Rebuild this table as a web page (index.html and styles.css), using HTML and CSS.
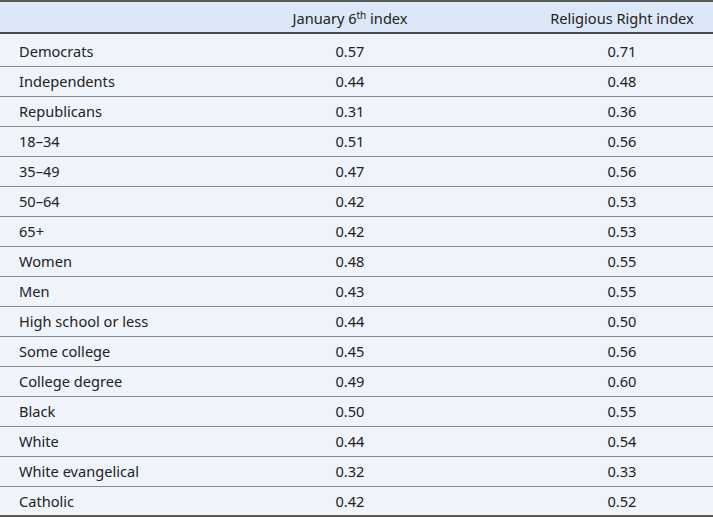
FILE: index.html
```html
<!DOCTYPE html>
<html lang="en">
<head>
<meta charset="utf-8">
<title>Index table</title>
<link rel="stylesheet" href="styles.css">
</head>
<body>
<table class="data">
  <colgroup>
    <col class="c-label">
    <col class="c-jan">
    <col class="c-rel">
  </colgroup>
  <thead>
    <tr>
      <th class="label"></th>
      <th>January 6<sup>th</sup> index</th>
      <th>Religious Right index</th>
    </tr>
  </thead>
  <tbody>
    <tr class="first"><td class="label">Democrats</td><td>0.57</td><td>0.71</td></tr>
    <tr><td class="label">Independents</td><td>0.44</td><td>0.48</td></tr>
    <tr><td class="label">Republicans</td><td>0.31</td><td>0.36</td></tr>
    <tr><td class="label">18–34</td><td>0.51</td><td>0.56</td></tr>
    <tr><td class="label">35–49</td><td>0.47</td><td>0.56</td></tr>
    <tr><td class="label">50–64</td><td>0.42</td><td>0.53</td></tr>
    <tr><td class="label">65+</td><td>0.42</td><td>0.53</td></tr>
    <tr><td class="label">Women</td><td>0.48</td><td>0.55</td></tr>
    <tr><td class="label">Men</td><td>0.43</td><td>0.55</td></tr>
    <tr><td class="label">High school or less</td><td>0.44</td><td>0.50</td></tr>
    <tr><td class="label">Some college</td><td>0.45</td><td>0.56</td></tr>
    <tr><td class="label">College degree</td><td>0.49</td><td>0.60</td></tr>
    <tr><td class="label">Black</td><td>0.50</td><td>0.55</td></tr>
    <tr><td class="label">White</td><td>0.44</td><td>0.54</td></tr>
    <tr><td class="label">White evangelical</td><td>0.32</td><td>0.33</td></tr>
    <tr class="last"><td class="label">Catholic</td><td>0.42</td><td>0.52</td></tr>
  </tbody>
</table>
</body>
</html>
```

FILE: styles.css
```css
html, body {
  margin: 0;
  padding: 0;
  background: #ffffff;
}

.data {
  width: 713px;
  border-collapse: collapse;
  table-layout: fixed;
  font-family: "Noto Sans", "Open Sans", sans-serif;
  font-size: 14.6px;
  color: #222222;
  background: #eff4fb;
  border-top: 2px solid #5a5a5a;
  border-bottom: 2px solid #5a5a5a;
}

.c-label { width: 169px; }
.c-jan { width: 362px; }
.c-rel { width: 182px; }

.data th,
.data td {
  padding: 0;
  text-align: center;
  font-weight: normal;
  white-space: nowrap;
}

.data th.label,
.data td.label {
  text-align: left;
  padding-left: 19px;
}

.data thead tr {
  height: 32px;
  background: #dce8f7;
  border-bottom: 2px solid #4a4a4a;
}

.data thead th {
  vertical-align: middle;
  padding-top: 1px;
}

.data sup {
  font-size: 10px;
  line-height: 0;
  vertical-align: 5px;
}

.data tbody tr {
  height: 30px;
  border-bottom: 1px solid #8c8c8c;
}

.data tbody tr.first {
  height: 33px;
}

.data tbody tr.first td {
  padding-top: 3px;
}

.data tbody tr.last {
  border-bottom: none;
}
```
